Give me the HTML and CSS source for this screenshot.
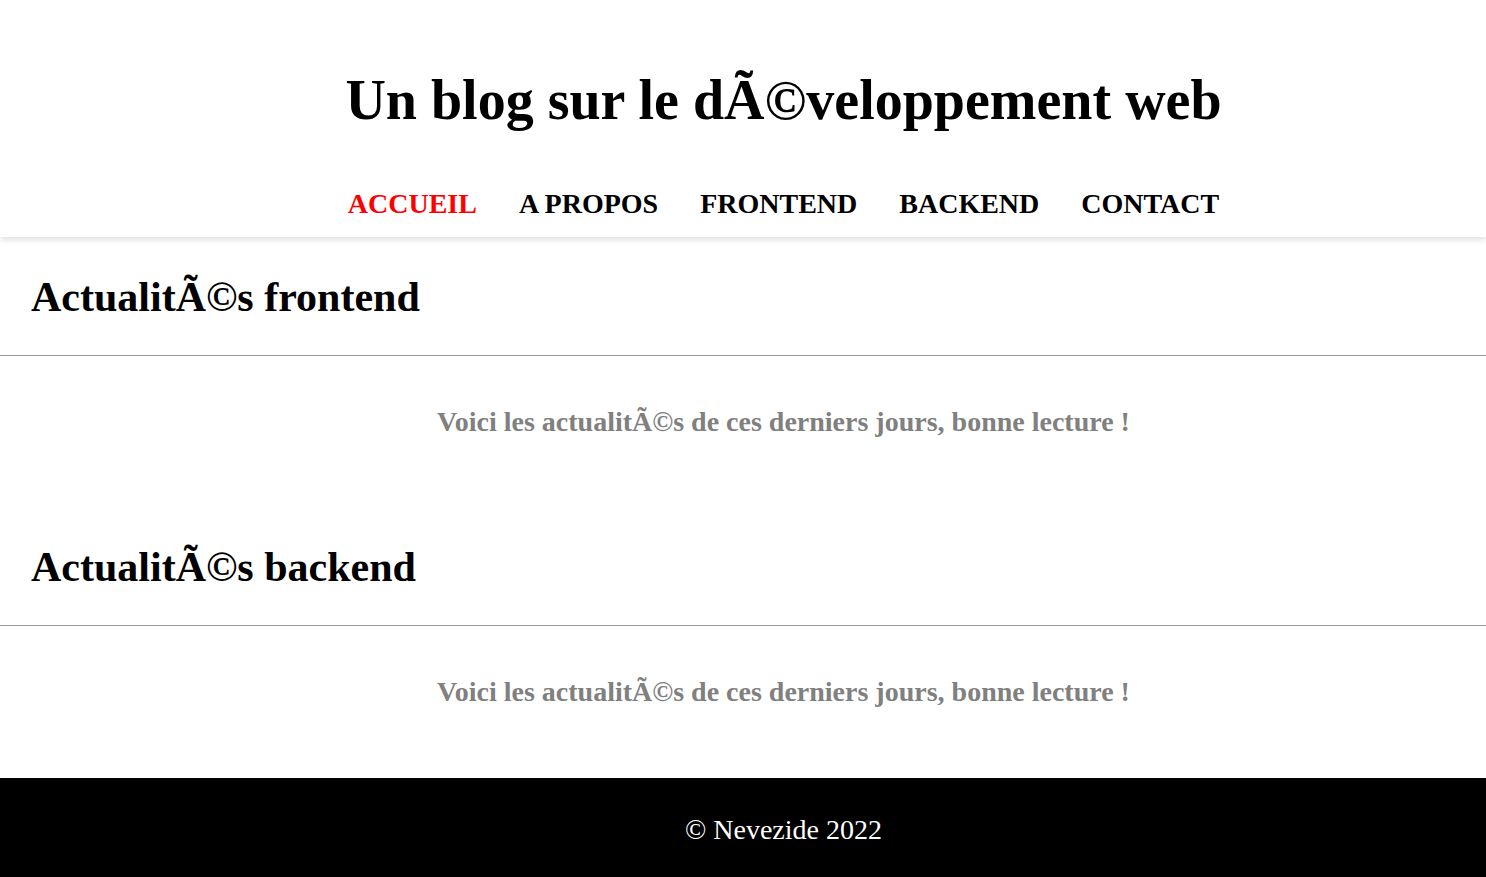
FILE: index.html
```html
<!DOCTYPE html>
<html lang="fr">
<head>
<meta charset="utf-8">
<title>Blog</title>
<link rel="stylesheet" href="styles.css">
</head>
<body>
<header class="site-header">
  <h1 class="site-title">Un blog sur le dÃ©veloppement web</h1>
  <nav class="main-nav">
    <a class="nav-link active" href="#">ACCUEIL</a>
    <a class="nav-link" href="#">A PROPOS</a>
    <a class="nav-link" href="#">FRONTEND</a>
    <a class="nav-link" href="#">BACKEND</a>
    <a class="nav-link" href="#">CONTACT</a>
  </nav>
</header>
<main class="content">
  <section class="news">
    <h2 class="news-title">ActualitÃ©s frontend</h2>
    <hr class="news-rule">
    <p class="news-intro">Voici les actualitÃ©s de ces derniers jours, bonne lecture !</p>
  </section>
  <section class="news">
    <h2 class="news-title">ActualitÃ©s backend</h2>
    <hr class="news-rule">
    <p class="news-intro">Voici les actualitÃ©s de ces derniers jours, bonne lecture !</p>
  </section>
</main>
<footer class="site-footer">
  <p class="copyright">© Nevezide 2022</p>
</footer>
</body>
</html>
```

FILE: styles.css
```css
* { box-sizing: border-box; }
body {
  margin: 0;
  font-family: "Liberation Serif", "Times New Roman", serif;
  background: #fff;
  color: #000;
}
.site-header {
  padding: 68px 0 15px 81px;
  text-align: center;
  box-shadow: 0 3px 6px rgba(0,0,0,0.12);
}
.site-title {
  margin: 0;
  font-size: 56px;
  font-weight: bold;
  line-height: 64px;
}
.main-nav {
  display: flex;
  justify-content: center;
  gap: 42px;
  margin-top: 54px;
}
.nav-link {
  font-size: 28px;
  font-weight: bold;
  color: #000;
  text-decoration: none;
  line-height: 36px;
}
.nav-link.active { color: #ff0000; }
.content { padding-bottom: 1px; }
.news-title {
  margin: 0;
  padding: 36px 32px 34px 31px;
  font-size: 42px;
  line-height: 48px;
}
.news-rule {
  margin: 0;
  border: 0;
  border-top: 1px solid #999;
}
.news-intro {
  margin: 0;
  padding: 48px 0 67px 81px;
  text-align: center;
  color: #808080;
  font-weight: bold;
  font-size: 28px;
  line-height: 36px;
}
.site-footer {
  background: #000;
  color: #fff;
  text-align: center;
  padding: 35px 0 32px 81px;
}
.copyright {
  margin: 0;
  font-size: 28px;
  line-height: 34px;
}
```
